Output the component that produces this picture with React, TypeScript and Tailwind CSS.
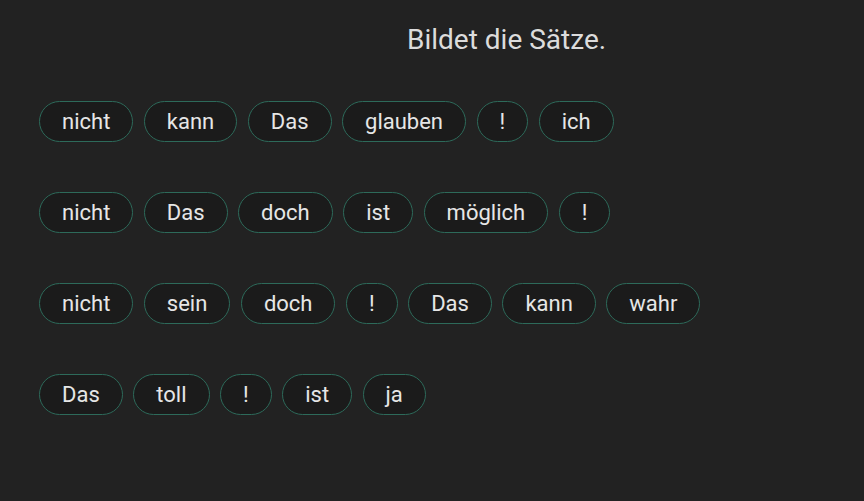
import React from 'react';

const rows: string[][] = [
  ['nicht', 'kann', 'Das', 'glauben', '!', 'ich'],
  ['nicht', 'Das', 'doch', 'ist', 'möglich', '!'],
  ['nicht', 'sein', 'doch', '!', 'Das', 'kann', 'wahr'],
  ['Das', 'toll', '!', 'ist', 'ja'],
];

const Chip: React.FC<{ word: string }> = ({ word }) => (
  <button className="h-[41px] px-[22px] rounded-full border-[1.5px] border-[#2d6a5a] bg-[#1b1b1b] text-[22px] leading-none text-[#e6e6e6]">
    {word}
  </button>
);

export default function App() {
  return (
    <div className="w-[864px] h-[501px] bg-[#222222] font-['Roboto',sans-serif] overflow-hidden">
      <div className="pt-[24px] pl-[407px] text-[28px] leading-[32px] text-[#dcdcdc]">Bildet die Sätze.</div>
      <div className="pl-[39px] pt-[45px] flex flex-col gap-[50px]">
        {rows.map((row, i) => (
          <div key={i} className="flex gap-[10.5px]">
            {row.map((w, j) => (
              <Chip key={j} word={w} />
            ))}
          </div>
        ))}
      </div>
    </div>
  );
}
